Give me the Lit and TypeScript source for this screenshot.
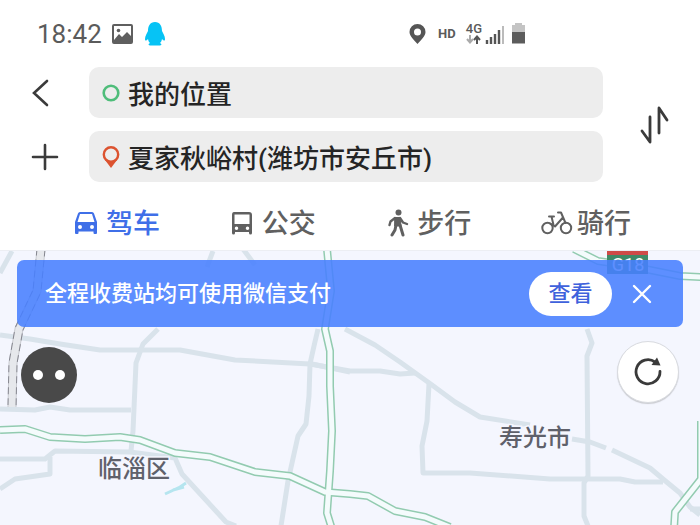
import { LitElement, html, css, svg } from "lit";
import { customElement } from "lit/decorators.js";

const FONT = css`Roboto, "Noto Sans CJK SC", sans-serif`;

const minorRoads = [
  "M12 250L0 272",
  "M213 250L207 266",
  "M0 334L30 338L60 343L100 349L180 349L235 359L310 363L350 370L380 370L400 373L415 372",
  "M345 328L375 344L400 361L432 384L455 401L480 416L530 424",
  "M572 438L590 441L606 447",
  "M612 449L650 467L663 478L680 492L690 506L700 514",
  "M429 383L427 420L422 445L423 472L470 472L550 478L620 478L635 481L663 481",
  "M587 328L592 342L587 355L588 475L584 482L584 515L588 525",
  "M318 328L314 345L310 363L309 395L306 423L298 435L288 480L281 525",
  "M158 328L143 343L136 362L133 430L131 450",
  "M0 408L35 409L50 406L70 409L131 409",
  "M0 458L45 458L55 450L130 451L175 457L182 473L226 521L236 525",
  "M50 456L50 473L15 478L0 488",
  "M312 363L350 371",
  "M690 508L700 508",
];

const highways = [
  "M0 429L25 428L50 436L85 438L120 436L140 439L175 452L210 456L255 471L290 475L325 491L350 493L368 495L395 510L425 516L450 526",
  "M327 248L331 290L325 328L330 350L330 385L332 430L330 470L327 512L332 528",
  "M574 248L598 260L625 264L680 275L702 276",
  "M701 420L701 478L675 511L674 528",
];

@customElement("route-map")
class RouteMap extends LitElement {
  static styles = css`
    :host { display: block; }
    svg { display: block; width: 100%; height: 100%; }
    .road { fill: none; stroke: #d9e3eb; stroke-width: 5; stroke-linejoin: round; }
    .highway-edge { fill: none; stroke: #92cbb0; stroke-width: 8; stroke-linejoin: round; }
    .highway { fill: none; stroke: #f4fbfc; stroke-width: 5; stroke-linejoin: round; }
    .rail-edge { fill: none; stroke: #85868f; stroke-width: 9; stroke-dasharray: 7 4; }
    .rail-bed { fill: none; stroke: #c9cbd1; stroke-width: 9; }
    .rail { fill: none; stroke: #e6e8ec; stroke-width: 7; }
    .water { fill: none; stroke: #b5e5ef; stroke-width: 3; }
    .label { font: 500 24px ${FONT}; fill: #5f616b; stroke: #f4f6fe; stroke-width: 3; paint-order: stroke; }
    .sign { font: 400 18px ${FONT}; fill: #fff; }
  `;

  render() {
    return html`<svg viewBox="0 250 700 275" preserveAspectRatio="xMidYMin slice" role="img" aria-label="地图">
      <rect y="250" width="700" height="275" fill="#f4f6fe" />
      ${minorRoads.map((d) => svg`<path class="road" d=${d} />`)}
      <path class="road" d="M243 248L255 264" />
      <path class="water" d="M165 493L180 486L186 482M173 489L184 486" />
      ${["rail-bed", "rail-edge", "rail"].map(
        (name) => svg`<path class=${name} d="M41 248L37 290L19 328L13 362L12 406" />`
      )}
      ${highways.map((d) => svg`<path class="highway-edge" d=${d} />`)}
      ${highways.map((d) => svg`<path class="highway" d=${d} />`)}
      <rect x="607" y="250" width="41" height="23" fill="#3f8a68" />
      <rect x="607" y="250" width="41" height="4" fill="#cf4a48" />
      <text class="sign" x="628" y="270" text-anchor="middle">G18</text>
      <text class="label" x="98" y="476">临淄区</text>
      <text class="label" x="499" y="445">寿光市</text>
    </svg>`;
  }
}

@customElement("app-root")
class AppRoot extends LitElement {
  static styles = css`
    :host {
      display: flex;
      flex-direction: column;
      min-height: 100vh;
      background: #fff;
      font-family: ${FONT};
      color: #5b5b5b;
    }
    svg { display: block; flex: none; }
    button {
      display: flex;
      align-items: center;
      justify-content: center;
      margin: 0;
      padding: 0;
      border: 0;
      background: none;
      color: inherit;
      font: inherit;
      cursor: pointer;
    }
    .status {
      display: flex;
      align-items: center;
      height: 67px;
      padding: 0 174px 0 37px;
      box-sizing: border-box;
    }
    .time { font-size: 26px; margin-right: 10px; }
    .notices { display: flex; align-items: center; gap: 11px; }
    .signals { display: flex; align-items: center; margin-left: auto; }
    .hd { font-size: 13px; font-weight: 700; margin: 0 10px 0 12px; }
    .network { display: flex; align-items: flex-end; gap: 3px; margin-right: 7px; }
    .data { display: flex; flex-direction: column; align-items: center; gap: 1px; font-size: 13px; line-height: 10px; font-weight: 500; }
    .route {
      display: grid;
      grid-template-columns: 89px 1fr 97px;
      grid-template-rows: 51px 51px;
      row-gap: 13px;
      color: #3b3b3b;
    }
    .swap { grid-column: 3; grid-row: 1 / 3; padding-left: 6px; }
    .field {
      display: flex;
      align-items: center;
      gap: 7px;
      padding: 0 12px;
      border-radius: 10px;
      background: #ededed;
    }
    .field input {
      flex: 1;
      min-width: 0;
      padding: 0;
      border: 0;
      outline: 0;
      background: none;
      color: #252525;
      font: 500 26px ${FONT};
    }
    .modes {
      display: flex;
      justify-content: space-between;
      height: 68px;
      padding: 0 69px 0 74px;
      box-sizing: border-box;
    }
    .mode { gap: 8px; padding-top: 16px; height: 68px; box-sizing: border-box; font-size: 27px; line-height: 36px; font-weight: 500; color: #606060; }
    .mode svg { margin-bottom: 2px; }
    .mode.active { color: #3f6fe8; }
    .mode.wide { gap: 4px; }
    .stage { position: relative; flex: 1; padding: 9px 17px 20px; min-height: 220px; box-sizing: border-box; border-top: 1px solid #eceef3; }
    .map { position: absolute; inset: 0; overflow: hidden; }
    .banner {
      position: relative;
      display: flex;
      align-items: center;
      height: 67px;
      padding: 0 30px 0 28px;
      border-radius: 7px;
      background: rgba(72, 128, 255, 0.88);
      color: #fff;
      font-size: 22px;
      line-height: 28px;
      font-weight: 500;
    }
    .message { flex: 1; }
    .view { width: 83px; height: 44px; border-radius: 22px; background: #fff; color: #3f62dc; margin-right: 19px; }
    .tools { position: relative; display: flex; justify-content: space-between; align-items: center; padding: 14px 4px 0; }
    .assistant { width: 56px; height: 56px; border-radius: 50%; background: #494949; gap: 12px; margin-top: 6px; }
    .eye { width: 10px; height: 10px; border-radius: 50%; background: #fff; }
    .refresh { width: 62px; height: 62px; border-radius: 50%; background: #fff; border: 1px solid #d9dbe0; box-shadow: 0 1px 1px #c9cbd0; color: #3a3a3a; }
  `;

  render() {
    return html`
      <header class="status">
        <span class="time">18:42</span>
        <span class="notices">
          <svg width="22" height="20" viewBox="0 0 22 20" fill="none" stroke="#5f5f5f" stroke-width="2">
            <rect x="1" y="1" width="19" height="18" rx="1" />
            <circle cx="6.5" cy="6.5" r="1.8" fill="#5f5f5f" stroke="none" />
            <path d="M2 16L7 10L10 13L15 8L20 13V19H2Z" fill="#5f5f5f" stroke="none" />
          </svg>
          <svg width="20" height="24" viewBox="1 0 20 24" fill="#06c3f5">
            <path d="M11 0C6 0 4 4 4 9C3 11 1 14 1 17C1 19 2 19 4 17C4.3 19 5 20 6 21C4 22 4 23.5 7 23.5H15C18 23.5 18 22 16 21C17 20 17.7 19 18 17C20 19 21 19 21 17C21 14 19 11 18 9C18 4 16 0 11 0Z" />
          </svg>
        </span>
        <span class="signals">
          <svg width="17" height="20" viewBox="0 0 17 20">
            <path fill="#555" fill-rule="evenodd" d="M8.5 0A8 8 0 0 0 .5 8C.5 12 5 16 8.5 20C12 16 16.5 12 16.5 8A8 8 0 0 0 8.5 0ZM8.5 4.5A3.5 3.5 0 1 1 8.5 11.5A3.5 3.5 0 0 1 8.5 4.5Z" />
          </svg>
          <span class="hd">HD</span>
          <span class="network">
            <span class="data">4G
              <svg width="15" height="9" viewBox="0 0 15 9" fill="none" stroke-width="2">
                <path stroke="#aaa" d="M4 0V7M1 4L4 7.5L7 4" />
                <path stroke="#555" d="M11 9V2M8 5L11 1.5L14 5" />
              </svg>
            </span>
            <svg width="19" height="19" viewBox="0 0 19 19">
              <path stroke="#555" stroke-width="2.4" d="M2 19V15M6 19V12M10 19V9M14 19V5" />
              <path stroke="#bbb" stroke-width="2" d="M18 19V1" />
            </svg>
          </span>
          <svg width="15" height="21" viewBox="0 0 15 21">
            <path fill="#c4c4c4" d="M4 0H11V2H14V9H1V2H4Z" />
            <path fill="#5c5c5c" d="M1 9H14V20.5H1Z" />
          </svg>
        </span>
      </header>

      <section class="route">
        <button aria-label="返回">
          <svg width="26" height="28" viewBox="0 0 26 28" fill="none" stroke="currentColor" stroke-width="2.6" stroke-linecap="round"><path d="M15 2L2 14L15 26" /></svg>
        </button>
        <label class="field">
          <svg width="20" height="20" viewBox="0 0 20 20" fill="none" stroke="#4fbd7a" stroke-width="2.6"><circle cx="10" cy="10" r="7.3" /></svg>
          <input aria-label="起点" .value=${"我的位置"} />
        </label>
        <button aria-label="添加途经点">
          <svg width="28" height="28" viewBox="0 0 28 28" stroke="currentColor" stroke-width="2.6" stroke-linecap="round"><path d="M14 2V26M2 14H26" /></svg>
        </button>
        <label class="field">
          <svg width="20" height="22" viewBox="0 0 20 22" fill="none">
            <path d="M4 14L10 22L16 14Z" fill="#dc5330" />
            <circle cx="10" cy="8.5" r="7.2" fill="#ededed" stroke="#dc5330" stroke-width="2.4" />
          </svg>
          <input aria-label="终点" .value=${"夏家秋峪村(潍坊市安丘市)"} />
        </label>
        <button class="swap" aria-label="交换起终点">
          <svg width="30" height="38" viewBox="0 0 30 38" fill="none" stroke="currentColor" stroke-width="2.8" stroke-linecap="round" stroke-linejoin="round"><path d="M2 25L10 36V11M19 27V2L27 14" /></svg>
        </button>
      </section>

      <nav class="modes">
        <button class="mode active">
          <svg width="24" height="24" viewBox="0 0 24 24">
            <path fill="currentColor" fill-rule="evenodd" d="M6 1H18Q19.5 1 20 2.5L23 11V22Q23 23 22 23H20.5Q19.5 23 19.5 22V20.5H4.5V22Q4.5 23 3.5 23H2Q1 23 1 22V11L4 2.5Q4.5 1 6 1ZM6 3L3.5 11H20.5L18 3ZM6 14A2 2 0 1 0 6 18A2 2 0 0 0 6 14ZM18 14A2 2 0 1 0 18 18A2 2 0 0 0 18 14Z" />
          </svg>
          驾车
        </button>
        <button class="mode">
          <svg width="24" height="24" viewBox="0 0 24 24">
            <path fill="currentColor" fill-rule="evenodd" d="M4 1H19Q22 1 22 4V22Q22 23.5 20.5 23.5Q19 23.5 19 22V21H5V22Q5 23.5 3.5 23.5Q2 23.5 2 22V4Q2 1 4 1ZM4.500 3.5V13H19.5V3.5ZM6.5 15.5A1.700 1.700 0 1 0 6.5 19A1.700 1.700 0 0 0 6.5 15.5ZM17.500 15.5A1.700 1.700 0 1 0 17.500 19A1.700 1.700 0 0 0 17.500 15.5Z" />
          </svg>
          公交
        </button>
        <button class="mode">
          <svg width="24" height="28" viewBox="-1 0 24 28" fill="none" stroke="currentColor" stroke-linecap="round" stroke-linejoin="round">
            <circle cx="12.5" cy="3.5" r="3" fill="currentColor" stroke="none" />
            <path d="M9 8.5H14L15 17H9Z" fill="currentColor" stroke-width="1" />
            <path d="M9 9L4.5 12.5L3.5 16M14 9L17 13.5L21 15" stroke-width="2.4" />
            <path d="M10 16L9 21L6 26M14 16L15.5 21L17 26" stroke-width="3" />
          </svg>
          步行
        </button>
        <button class="mode wide">
          <svg width="32" height="24" viewBox="0 0 32 24" fill="none" stroke="currentColor" stroke-width="2" stroke-linecap="round" stroke-linejoin="round">
            <circle cx="6.5" cy="17" r="5.200" /><circle cx="25" cy="17" r="5.200" />
            <path d="M8 5.500H13M10.500 5.500L12.500 14M9 12.500L14 15.500L21.500 7M17 1.500H20L24.500 12" />
          </svg>
          骑行
        </button>
      </nav>

      <main class="stage">
        <route-map class="map"></route-map>
        <div class="banner" role="status">
          <span class="message">全程收费站均可使用微信支付</span>
          <button class="view">查看</button>
          <button aria-label="关闭">
            <svg width="22" height="22" viewBox="0 0 22 22" stroke="#fff" stroke-width="2.4" stroke-linecap="round"><path d="M3 3L19 19M19 3L3 19" /></svg>
          </button>
        </div>
        <div class="tools">
          <button class="assistant" aria-label="语音助手"><span class="eye"></span><span class="eye"></span></button>
          <button class="refresh" aria-label="刷新">
            <svg width="32" height="32" viewBox="0 0 32 32" fill="none">
              <path d="M23 6A12 12 0 1 0 28 15.5" stroke="currentColor" stroke-width="2.8" stroke-linecap="round" />
              <path d="M25 1.500L28.500 9.500L19.500 9Z" fill="currentColor" />
            </svg>
          </button>
        </div>
      </main>
    `;
  }
}
